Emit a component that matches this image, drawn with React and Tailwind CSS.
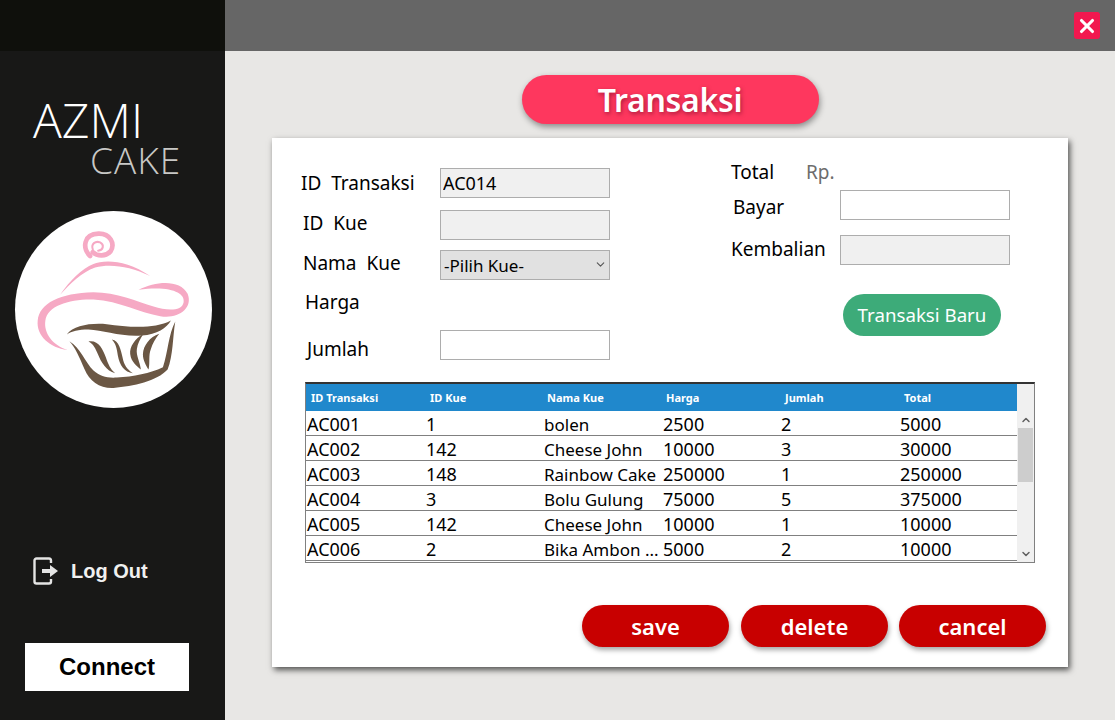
import React from "react";
import { ChevronDown, ChevronUp, X } from "lucide-react";

const rows = [
  ["AC001", "1", "bolen", "2500", "2", "5000"],
  ["AC002", "142", "Cheese John", "10000", "3", "30000"],
  ["AC003", "148", "Rainbow Cake", "250000", "1", "250000"],
  ["AC004", "3", "Bolu Gulung", "75000", "5", "375000"],
  ["AC005", "142", "Cheese John", "10000", "1", "10000"],
  ["AC006", "2", "Bika Ambon ...", "5000", "2", "10000"],
];

const headers = ["ID Transaksi", "ID Kue", "Nama Kue", "Harga", "Jumlah", "Total"];

const gridCols = "grid grid-cols-[119px_118px_119px_118px_119px_1fr]";

const CupcakeLogo = () => (
  <svg viewBox="0 0 590 590" className="w-[197px] h-[197px] rounded-full bg-white">
    <g transform="translate(-15 -17)">
      <path
        d="M240 152C216 128 220 86 265 85C300 84 316 115 301 138C288 153 262 154 248 140"
        fill="none"
        stroke="#f6a9c4"
        strokeWidth="14"
        strokeLinecap="round"
      />
      <path
        d="M248 132C242 115 256 106 270 111C283 118 280 134 264 136"
        fill="none"
        stroke="#f6a9c4"
        strokeWidth="6"
        strokeLinecap="round"
      />
      <path
        fill="#f6a9c4"
        d="M150 268C180 225 215 190 250 176C280 162 350 162 420 212C360 182 300 174 255 186C215 200 180 235 150 268Z"
      />
      <path
        fill="#f6a9c4"
        d="M172 433C120 428 78 390 83 345C88 293 150 262 250 260C320 260 380 288 430 303C470 316 515 318 520 290C525 262 480 240 385 253C440 225 510 222 532 265C550 310 500 342 450 332C390 322 330 287 250 282C180 280 112 300 106 345C100 385 130 420 172 433Z"
      />
      <g fill="#6b5744">
        <path d="M170 387C190 360 240 352 290 356C350 364 430 373 482 345C470 367 440 387 395 390C330 394 280 374 235 372C205 372 185 377 170 387Z" />
        <path d="M178 407C210 425 225 470 250 495C270 512 290 518 320 516C370 513 420 503 458 485C473 440 475 385 495 348C487 395 489 450 472 492C440 527 370 542 310 547C270 549 238 527 223 490C208 455 195 425 178 407Z" />
        <path d="M235 408C265 403 277 430 287 455C294 475 300 490 315 503C288 495 273 470 263 445C256 430 250 415 235 408Z" />
        <path d="M305 402C327 405 332 435 337 455C342 480 350 490 368 503C343 500 328 480 323 450C320 430 318 415 305 402Z" />
        <path d="M400 385C373 400 358 425 360 445C363 470 380 480 392 492C390 470 377 450 380 430C382 415 390 400 400 385Z" />
        <path d="M447 385C418 395 400 420 398 445C398 465 408 480 415 492C420 470 414 450 422 430C427 415 435 400 447 385Z" />
      </g>
    </g>
  </svg>
);

const LogoutIcon = () => (
  <svg viewBox="0 0 26 28" className="w-[26px] h-[28px]" fill="none">
    <path
      d="M18 6V3.5C18 2.5 17.4 1.5 16 1.5H3.5C2.4 1.5 1.5 2.4 1.5 3.5V24.5C1.5 25.6 2.4 26.5 3.5 26.5H16C17.4 26.5 18 25.5 18 24.5V22"
      stroke="#e4e4e4"
      strokeWidth="2.4"
    />
    <path d="M9 12H17V8L25 14L17 20V16H9Z" fill="#e4e4e4" />
  </svg>
);

const Field = ({ value = "", className = "bg-[#f0f0f0]" }) => (
  <input
    readOnly
    value={value}
    className={`w-[170px] h-[30px] border border-[#adadad] px-[2px] text-[18px] text-black outline-none ${className}`}
  />
);

const App = () => {
  return (
    <div className="flex w-[1115px] h-[720px] overflow-hidden bg-[#e8e7e5] font-['Noto_Sans',sans-serif] text-black">
      <aside className="flex flex-col w-[225px] h-full bg-[#181817]">
        <div className="h-[51px] bg-[#0f100c]" />
        <div className="flex flex-col pt-[46px] pl-[33px] font-['Open_Sans',sans-serif] font-light">
          <span className="text-[48px] leading-[46px] text-white">AZMI</span>
          <span className="ml-[57px] text-[37px] leading-[34px] text-[#c8c8c6] tracking-[1px]">CAKE</span>
        </div>
        <div className="ml-[15px] mt-[34px]">
          <CupcakeLogo />
        </div>
        <div className="flex items-center gap-[12px] ml-[33px] mt-[148px] font-['Liberation_Sans',sans-serif] font-bold text-[20px] text-[#f0f0f0]">
          <LogoutIcon />
          <span>Log Out</span>
        </div>
        <button className="ml-[25px] mt-[57px] w-[164px] h-[48px] bg-white font-['Liberation_Sans',sans-serif] font-bold text-[24px] text-black">
          Connect
        </button>
      </aside>

      <main className="flex flex-col flex-1">
        <header className="flex items-center justify-end h-[51px] pr-[15px] bg-[#666666]">
          <button className="flex items-center justify-center w-[26px] h-[27px] rounded-[3px] bg-[#f2184f]">
            <X size={22} strokeWidth={3.4} color="#ffffff" />
          </button>
        </header>

        <div className="flex items-center justify-center self-center w-[297px] h-[49px] mt-[24px] rounded-full bg-[#fe375e] shadow-[1px_3px_6px_rgba(0,0,0,0.4)]">
          <h1 className="text-[32px] font-semibold text-white tracking-[-0.3px] [text-shadow:1px_2px_4px_rgba(90,0,30,0.5)]">
            Transaksi
          </h1>
        </div>

        <section className="flex flex-col self-center w-[796px] h-[529px] mt-[14px] pt-[22px] pl-[29px] pr-[22px] bg-white shadow-[2px_3px_6px_rgba(0,0,0,0.65)]">
          <div className="flex text-[19px] h-[200px]">
            <div className="flex flex-col w-[309px] pt-[8px]">
              <div className="flex items-center justify-between h-[30px]">
                <span className="whitespace-pre">ID  Transaksi</span>
                <Field value="AC014" />
              </div>
              <div className="flex items-center justify-between h-[30px] mt-[12px]">
                <span className="ml-[2px] pb-1 whitespace-pre">ID  Kue</span>
                <Field />
              </div>
              <div className="flex items-center justify-between h-[30px] mt-[10px]">
                <span className="ml-[2px] pb-1 whitespace-pre">Nama  Kue</span>
                <div className="relative w-[170px] h-[30px]">
                  <select className="appearance-none w-full h-full pl-[3px] pt-[2px] bg-[#e1e1e1] border border-[#adadad] text-[17px] outline-none">
                    <option>-Pilih Kue-</option>
                  </select>
                  <ChevronDown size={13} color="#555555" className="absolute right-[3px] top-[8px]" />
                </div>
              </div>
              <div className="flex items-center h-[30px] mt-[7px] ml-[4px]">Harga</div>
              <div className="flex items-center justify-between h-[30px] mt-[13px]">
                <span className="ml-[6px] pt-2">Jumlah</span>
                <Field className="bg-white" />
              </div>
            </div>

            <div className="flex flex-col ml-[121px] w-[279px]">
              <div className="flex items-center h-[24px]">
                <span className="w-[75px]">Total</span>
                <span className="text-[#6d6d6d]">Rp.</span>
              </div>
              <div className="flex items-center justify-between h-[30px] mt-[6px]">
                <span className="ml-[2px] pt-1">Bayar</span>
                <Field className="bg-white" />
              </div>
              <div className="flex items-center justify-between h-[30px] mt-[15px]">
                <span className="pb-[2px]">Kembalian</span>
                <Field />
              </div>
              <button className="ml-[112px] mt-[29px] w-[158px] h-[42px] rounded-full bg-[#3dab79] text-[18.7px] text-white">
                Transaksi Baru
              </button>
            </div>
          </div>

          <div className="flex ml-[4px] mt-[22px] w-[730px] h-[181px] border border-[#808080] border-t-2 border-t-[#333333]">
            <div className="flex flex-col w-[711px]">
              <div className={`${gridCols} items-center h-[27px] pt-px bg-[#2088cc] text-[11px] font-bold text-white`}>
                {headers.map((h, i) => (
                  <span key={h} className={i === 2 || i === 3 ? "pl-[4px]" : "pl-[5px]"}>
                    {h}
                  </span>
                ))}
              </div>
              {rows.map((r) => (
                <div key={r[0]} className={`${gridCols} items-center h-[25px] pt-px border-b border-[#808080] text-[18px] leading-[24px]`}>
                  {r.map((c, i) => (
                    <span key={i} className={i === 2 ? "whitespace-nowrap pl-[1px] translate-y-px text-[17px]" : "whitespace-nowrap pl-[1px]"}>
                      {c}
                    </span>
                  ))}
                </div>
              ))}
            </div>
            <div className="flex flex-col items-center flex-1 bg-[#f0f0f0]">
              <div className="h-[27px]" />
              <div className="flex items-center justify-center h-[17px]">
                <ChevronUp size={12} strokeWidth={3} color="#606060" />
              </div>
              <div className="w-[15px] h-[54px] bg-[#cdcdcd]" />
              <div className="flex-1" />
              <div className="flex items-center justify-center h-[17px]">
                <ChevronDown size={12} strokeWidth={3} color="#606060" />
              </div>
            </div>
          </div>

          <div className="flex justify-end mt-[42px]">
            <button className="w-[147px] h-[42px] mr-[12px] rounded-full bg-[#c80000] text-[22px] font-semibold text-white shadow-[1px_3px_5px_rgba(0,0,0,0.35)]">
              save
            </button>
            <button className="w-[147px] h-[42px] mr-[11px] rounded-full bg-[#c80000] text-[22px] font-semibold text-white shadow-[1px_3px_5px_rgba(0,0,0,0.35)]">
              delete
            </button>
            <button className="w-[147px] h-[42px] rounded-full bg-[#c80000] text-[22px] font-semibold text-white shadow-[1px_3px_5px_rgba(0,0,0,0.35)]">
              cancel
            </button>
          </div>
        </section>
      </main>
    </div>
  );
};

export default App;
